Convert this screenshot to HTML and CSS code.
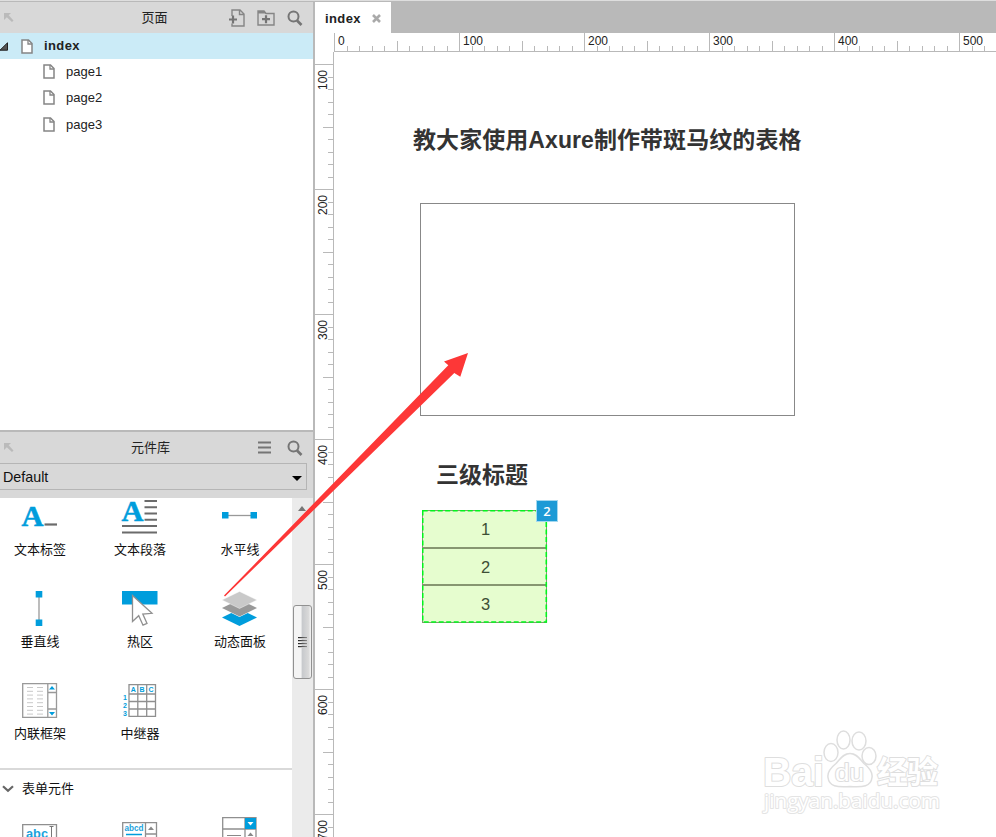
FILE: index.html
```html
<!DOCTYPE html>
<html lang="zh-CN">
<head>
<meta charset="utf-8">
<title>index</title>
<link rel="stylesheet" href="styles.css">
</head>
<body>
<svg class="defs" width="0" height="0">
  <symbol id="page" viewBox="0 0 12 15"><path d="M1 1h6.500L11 4.500V14H1z" fill="#fff" stroke="#858585" stroke-width="1.500"/><path d="M7 1v4h4" fill="none" stroke="#858585" stroke-width="1.300"/></symbol>
  <symbol id="search" viewBox="0 0 16 16"><circle cx="6.500" cy="6.500" r="5" fill="none" stroke="#757575" stroke-width="2"/><path d="M10 10.500l4.500 4.500" stroke="#757575" stroke-width="2.600"/></symbol>
  <symbol id="corner" viewBox="0 0 10 10"><path d="M0 0h7L4.700 2.300 9.500 7.500 8 9 2.800 4.300 0 7z" fill="#bababa"/></symbol>
</svg>
<div class="app">
  <aside class="side">
    <section class="pages">
      <header class="bar">
        <svg class="corner" width="10" height="10"><use href="#corner"/></svg>
        <span class="bar-title">页面</span>
        <span class="tools">
          <svg width="16" height="18" viewBox="0 0 16 18"><path d="M3 7V1h8l4 4v12H3v-2.500M10.500 1v4.500H15" fill="none" stroke="#858585" stroke-width="1.400"/><path d="M0 10.500h8M4 6.500v8" stroke="#757575" stroke-width="2.200"/></svg>
          <svg width="18" height="16" viewBox="0 0 18 16"><path d="M1 15V1h6l2 2.500h8V15z" fill="none" stroke="#858585" stroke-width="1.400"/><path d="M1 1h6l2 2.500H1z" fill="#858585"/><path d="M5 9.200h8M9 5.200v8" stroke="#757575" stroke-width="2.200"/></svg>
          <svg width="16" height="16"><use href="#search"/></svg>
        </span>
      </header>
      <div class="row root"><svg class="twist" width="9" height="9"><path d="M0 8.200L7.500 .8V8.200z" fill="#555" stroke="#222"/></svg><svg width="12" height="15"><use href="#page"/></svg><b>index</b></div>
      <div class="row child"><svg width="12" height="15"><use href="#page"/></svg><span>page1</span></div>
      <div class="row child"><svg width="12" height="15"><use href="#page"/></svg><span>page2</span></div>
      <div class="row child last"><svg width="12" height="15"><use href="#page"/></svg><span>page3</span></div>
    </section>
    <section class="library">
      <header class="bar lib-bar">
        <svg class="corner" width="10" height="10"><use href="#corner"/></svg>
        <span class="bar-title">元件库</span>
        <span class="tools">
          <svg width="13" height="13" viewBox="0 0 13 13"><path d="M0 1.500h13M0 6.500h13M0 11.500h13" stroke="#757575" stroke-width="2"/></svg>
          <svg width="16" height="16"><use href="#search"/></svg>
        </span>
      </header>
      <div class="select-wrap"><div class="select"><span>Default</span><svg width="10" height="5"><path d="M0 0h10L5 5z"/></svg></div></div>
      <div class="lib-body">
        <div class="lib-list">
          <div class="grid">
            <div class="item"><svg width="36" height="36"><text class="serif" x="-.5" y="26.500" font-size="29" textLength="22" lengthAdjust="spacingAndGlyphs">A</text><path d="M22.500 25.500H35" stroke="#6b6b6b" stroke-width="2.200"/></svg><span>文本标签</span></div>
            <div class="item"><svg width="36" height="36"><text class="serif" x="-.5" y="22" font-size="30" textLength="22" lengthAdjust="spacingAndGlyphs">A</text><path d="M22.500 2H35M22.500 8.300H35M22.500 14.500H35M22.500 20.700H35M0 27H35M0 33.500H35" stroke="#6b6b6b" stroke-width="2"/></svg><span>文本段落</span></div>
            <div class="item"><svg width="36" height="36"><path d="M3 16.500H33" stroke="#999" stroke-width="1.300"/><path d="M0 13h6.500v6.500H0zM28.500 13H35v6.500h-6.500z" fill="#009ddc"/></svg><span>水平线</span></div>
            <div class="item"><svg width="36" height="36"><path d="M17 3V33" stroke="#999" stroke-width="1.300"/><path d="M13.700 0h6.600v6.500h-6.600zM13.700 28.500h6.600V35h-6.600z" fill="#009ddc"/></svg><span>垂直线</span></div>
            <div class="item"><svg width="36" height="36"><path d="M0 0h35.500v13.500H0z" fill="#009ddc"/><path d="M10.500 4.500v26l6.200-5.800 4.300 9.500 4-1.800-4.200-9.300 9.200-.8z" fill="#fff" stroke="#909090" stroke-width="1.300"/></svg><span>热区</span></div>
            <div class="item"><svg width="36" height="36"><path d="M0 26.500L17.500 18 35 26.500 17.500 35z" fill="#009ddc"/><path d="M0 17.500L17.500 9 35 17.500 17.500 26z" fill="#fff"/><path d="M0 17L17.500 8.500 35 17 17.500 25.500z" fill="#999"/><path d="M0 9L17.500 .5 35 9 17.500 17.500z" fill="#c9c9c9" stroke="#fff" stroke-width=".4"/></svg><span>动态面板</span></div>
            <div class="item"><svg width="36" height="36"><path d="M.7 .7H34.500V34.300H.7zM25.800 .7V34.300M25.800 9.500H34.500M25.800 26H34.500" fill="none" stroke="#999" stroke-width="1.300"/><path d="M5 4.500h6M15 4.500h6M5 8.300h6M15 8.300h6M5 12.100h6M15 12.100h6M5 15.900h6M15 15.900h6M5 19.700h6M15 19.700h6M5 23.500h6M15 23.500h6M5 27.300h6M15 27.300h6M5 31.100h6M15 31.100h6" stroke="#c9c9c9"/><path d="M27 6.500l3-3.500 3 3.500zM27 29l3 3.500 3-3.500z" fill="#009ddc"/></svg><span>内联框架</span></div>
            <div class="item"><svg width="36" height="36"><path d="M7 1.700H33.500V33.300H7zM15.800 1.700V33.300M24.700 1.700V33.300M7 11H33.500M7 18.500H33.500M7 26H33.500" fill="none" stroke="#8f8f8f" stroke-width="1.300"/><g class="tiny"><text x="8.800" y="9.300">A</text><text x="17.500" y="9.300">B</text><text x="26.500" y="9.300">C</text><text x="1" y="17">1</text><text x="1" y="24.500">2</text><text x="1" y="32.500">3</text></g></svg><span>中继器</span></div>
          </div>
          <div class="group"><svg width="12" height="8"><path d="M1 1.200l5 4.600 5-4.600" fill="none" stroke="#666" stroke-width="2.200"/></svg><span>表单元件</span></div>
          <div class="grid forms">
            <div class="item"><svg width="36" height="36"><path d="M.7 8.700H34.500V29H.7z" fill="#fff" stroke="#8f8f8f" stroke-width="1.300"/><text class="abc" x="4" y="22" font-size="13" textLength="22" lengthAdjust="spacingAndGlyphs">abc</text><path d="M27.500 10.500h4M29.500 10.500V26" stroke="#777"/></svg></div>
            <div class="item"><svg width="36" height="36"><path d="M.7 6.700H34.500V34H.7zM23.500 6.700V34M23.500 18H34.500" fill="#fff" stroke="#8f8f8f" stroke-width="1.300"/><text class="abc" x="2.500" y="14.500" font-size="9" textLength="19" lengthAdjust="spacingAndGlyphs">abcd</text><path d="M4 18.500h16M4 22h16" stroke="#009ddc" stroke-width="1.300"/><path d="M26 14l3-3.500 3 3.500z" fill="#888"/></svg></div>
            <div class="item"><svg width="36" height="36"><path d="M.7 1.700H34V34H.7zM.7 13H34M23 1.700V34" fill="#fff" stroke="#8f8f8f" stroke-width="1.300"/><path d="M23 2h11v11H23z" fill="#009ddc"/><path d="M25.500 6h6l-3 3.500z" fill="#fff"/><path d="M5 19.500h14" stroke="#888"/><path d="M25.500 20l3-3.500 3 3.500z" fill="#888"/></svg></div>
          </div>
        </div>
        <div class="scroll"><svg class="up" width="8" height="5"><path d="M0 5L4 0l4 5z" fill="#777"/></svg><div class="thumb"><i></i><i></i><i></i><i></i></div></div>
      </div>
    </section>
  </aside>
  <main class="work">
    <div class="tabs"><div class="tab"><b>index</b><svg width="9" height="9"><path d="M1 1l7 7M8 1L1 8" stroke="#aaa" stroke-width="2.600"/></svg></div></div>
    <div class="hruler"><span>0</span><span>100</span><span>200</span><span>300</span><span>400</span><span>500</span></div>
    <div class="stage">
      <div class="vruler"><span>100</span><span>200</span><span>300</span><span>400</span><span>500</span><span>600</span><span>700</span></div>
      <div class="canvas">
        <h1>教大家使用Axure制作带斑马纹的表格</h1>
        <div class="box"></div>
        <h2>三级标题</h2>
        <div class="repeater"><div>1</div><div>2</div><div>3</div><svg class="outline" width="126" height="113"><rect x=".7" y=".7" width="123.600" height="111.300" fill="none" stroke="#00f51c" stroke-width="1.600" stroke-dasharray="5 2.500"/></svg></div>
        <div class="badge">2</div>
        <svg class="mark" width="190" height="90" viewBox="758 725 190 90">
          <g fill="#fff" stroke="#dedede" stroke-width="1.500">
            <text class="outlined" x="763" y="786" font-size="40" font-weight="bold" textLength="61" lengthAdjust="spacingAndGlyphs">Bai</text>
            <ellipse cx="831" cy="752.500" rx="7" ry="9"/><ellipse cx="843.500" cy="740" rx="6.500" ry="9"/><ellipse cx="859" cy="741" rx="7" ry="9"/><ellipse cx="869" cy="756" rx="7" ry="8.500"/>
            <path d="M850 753.500c-7 0-10 6-14 10-5 4-9 8-8 14 1 9 9 10 22 9 13 1 21 0 22-9 1-6-3-10-8-14-4-4-7-10-14-10z"/>
            <text class="outlined" x="835" y="780.500" font-size="23" textLength="29" lengthAdjust="spacingAndGlyphs">du</text>
            <text class="outlined" x="877" y="783" font-size="31" font-weight="bold" textLength="61">经验</text>
            <text class="outlined url" x="764" y="808" font-size="20" textLength="176" lengthAdjust="spacingAndGlyphs">jingyan.baidu.com</text>
          </g>
        </svg>
      </div>
    </div>
  </main>
  <svg class="arrow" width="996" height="837"><path d="M224 595.500L448.300 365.300 444 361.500 468 353 460.300 376.800 454.300 373 225 596.500z" fill="#fd3737"/></svg>
</div>
</body>
</html>
```
FILE: styles.css
```css
* { box-sizing: border-box; }
body { margin: 0; background: #fff; color: #222; font: 13px/16px "Liberation Sans", "Noto Sans CJK SC", sans-serif; }
svg { display: block; flex: none; }
.defs { position: absolute; }
.app { position: relative; display: flex; width: 996px; height: 837px; overflow: hidden; border-top: 1px solid #dedede; }
.side { display: flex; flex-direction: column; width: 315px; flex: none; border-right: 2px solid #b9b9b9; }
.pages { height: 429px; border-top: 1px solid #b9b9b9; }
.bar { display: flex; align-items: center; height: 31px; padding: 0 10px 0 4px; background: #d8d8d8; }
.bar-title { flex: 1; text-align: center; padding-left: 74px; }
.lib-bar .bar-title { padding-left: 37px; }
.tools { display: flex; align-items: center; gap: 12px; margin-left: 8px; }
.lib-bar .tools { gap: 16px; }
.row { display: flex; align-items: center; height: 26px; gap: 11px; }
.root { background: #cbebf7; gap: 0; }
.root .twist { margin-right: 12px; }
.root b { margin-left: 11px; }
b { letter-spacing: .4px; }
.child { padding-left: 43px; }
.child svg { margin-top: -1px; }
.last { height: 27px; }
.library { flex: 1; display: flex; flex-direction: column; min-height: 0; border-top: 2px solid #b9b9b9; }
.select-wrap { height: 35px; flex: none; background: #d8d8d8; padding-right: 6px; }
.select { height: 27px; border: 1px solid #b5b5b5; border-left: 0; display: flex; align-items: center; justify-content: space-between; padding: 2px 4px 0 3px; font-size: 14.300px; color: #111; }
.select span { margin-top: -2px; }
.select svg { margin-top: 2px; }
.lib-bar { flex: none; }
.lib-body { flex: 1; display: flex; min-height: 0; overflow: hidden; }
.lib-list { width: 292px; padding-top: 1px; flex: none; }
.grid { display: grid; grid-template-columns: repeat(3, 100px); grid-auto-rows: 92px; width: 300px; height: 269px; margin-left: -10px; }
.item { display: flex; flex-direction: column; align-items: center; gap: 7px; color: #111; }
.item svg { margin-left: -1px; overflow: visible; }
.group { border-top: 2px solid #d9d9d9; height: 48px; display: flex; align-items: flex-start; padding: 11px 0 0 2px; gap: 8px; color: #111; }
.group svg { margin-top: 4px; }
.serif { font-family: "Liberation Serif", serif; font-weight: bold; fill: #009ddc; stroke: #009ddc; stroke-width: .5px; }
.tiny { font: bold 7px "Liberation Sans", sans-serif; fill: #009ddc; }
.abc { font-family: "Liberation Sans", sans-serif; font-weight: bold; fill: #1ba3dc; }
.scroll { width: 21px; background: #ebebeb; }
.up { margin: 8px 0 0 6px; }
.thumb { width: 19px; height: 74px; margin: 94px 0 0 1px; border: 1px solid #919191; border-radius: 3px; background: linear-gradient(90deg, #f4f4f4 0 40%, #c8cacd 50%, #d9d9d9 85%, #f4f4f4); display: flex; flex-direction: column; align-items: center; justify-content: center; gap: 1px; }
.thumb i { width: 9px; height: 2px; background: linear-gradient(90deg, #222, #888); border-bottom: 1px solid #ccc; }
.work { flex: 1; display: flex; flex-direction: column; min-width: 0; }
.tabs { height: 32px; flex: none; background: #b9b9b9; }
.tab { display: flex; align-items: center; gap: 11px; width: 76px; height: 31px; padding: 2px 0 0 10px; margin-top: 1px; background: #fff; }
.hruler { display: flex; flex: none; height: 19px; margin-left: 19px; border-bottom: 1px solid #b9b9b9; overflow: hidden; }
.hruler span { flex: none; width: 125px; padding-left: 3px; font-size: 12px; line-height: 16px; color: #222; border-left: 1px solid #b9b9b9; background: repeating-linear-gradient(90deg, #b9b9b9 0 .2px, transparent .2px 11.700px, #b9b9b9 11.700px 12.500px) 0 100% / 124px 5px no-repeat, linear-gradient(#b9b9b9, #b9b9b9) 62px 100% / 1px 10px no-repeat; }
.stage { flex: 1; display: flex; min-height: 0; }
.vruler { width: 19px; flex: none; padding-top: 12px; border-right: 1px solid #b9b9b9; overflow: hidden; }
.vruler span { display: block; width: 18px; height: 125px; padding: 5px 0 0 1px; border-top: 1px solid #b9b9b9; font-size: 12px; line-height: 14px; writing-mode: sideways-lr; text-align: right; background: repeating-linear-gradient(180deg, #b9b9b9 0 .2px, transparent .2px 11.700px, #b9b9b9 11.700px 12.500px) 100% 0 / 5px 124px no-repeat, linear-gradient(#b9b9b9, #b9b9b9) 100% 62px / 10px 1px no-repeat; }
.canvas { position: relative; flex: 1; }
h1, h2 { position: absolute; margin: 0; font-size: 23px; line-height: 30px; color: #333; white-space: nowrap; }
h1 { left: 79px; top: 73px; letter-spacing: .07px; }
h2 { left: 102px; top: 408px; }
.box { position: absolute; left: 86px; top: 151px; width: 375px; height: 213px; border: 1px solid #888; }
.repeater { position: absolute; left: 88px; top: 458px; width: 125px; height: 113px; border: 1px solid #849871; background: #e6fdcf; font-size: 16.500px; color: #3d4f35; }
.repeater div { height: 37.500px; line-height: 37px; text-align: center; padding-left: 2px; border-bottom: 2px solid #879671; }
.repeater div:nth-child(3) { border: 0; height: 35px; }
.outline { position: absolute; left: -1px; top: -1px; }
.badge { position: absolute; left: 202px; top: 448px; width: 22px; height: 22px; border: 1px solid #a4d8ef; background: #1c9ad6; color: #fff; text-align: center; font: 600 13px/20px "Open Sans", sans-serif; }
.mark { position: absolute; left: 424px; top: 673px; }
.outlined { font-family: "Liberation Sans", "Noto Sans CJK SC", sans-serif; paint-order: stroke; stroke-width: 2px; stroke-linejoin: round; }
.url { font-family: "Open Sans", sans-serif; stroke: #e4e4e4; }
.arrow { position: absolute; left: 0; top: -1px; pointer-events: none; }
```
